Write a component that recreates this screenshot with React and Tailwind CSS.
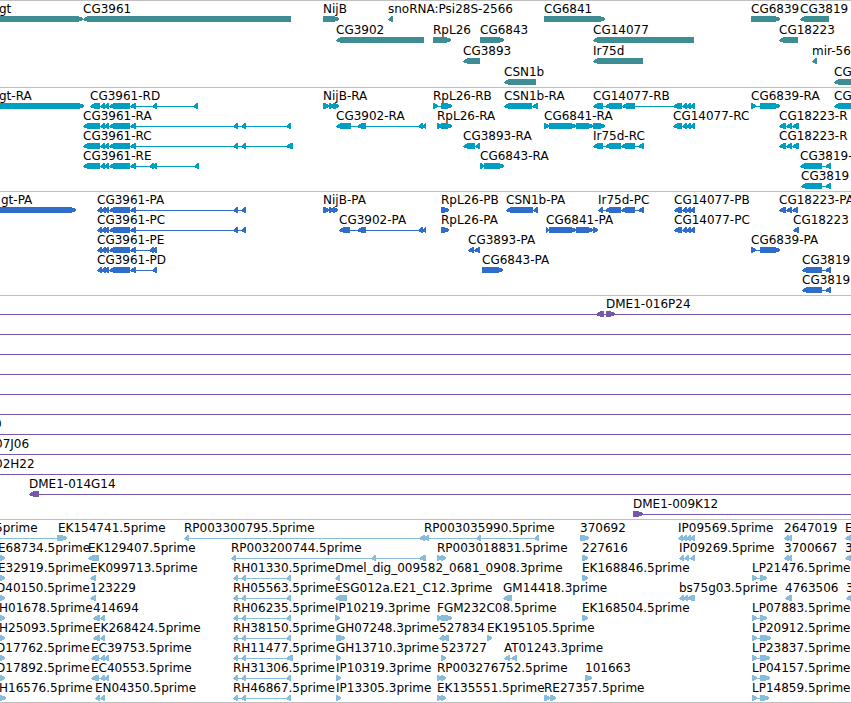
// src/App.jsx
import React from "react";

const HEAD = 6; // length of an arrow head
const GLYPH_HEIGHT = 6;

// Exons shared by several transcripts
const CG3961_EXONS = [[100, 105], [104, 109], [109, 130], [130, 136]];
const CG3961_CDS = [[97, 102], [101, 106], [104, 109], [109, 130], [130, 136]];
const CG14077_EXONS = [[682, 687], [686, 691], [690, 695]];
const CG18223_EXONS = [[779, 786], [786, 792], [792, 799]];
const IR75D_EXONS = [[605, 621], [621, 635], [638, 644]];
const RH_EXONS = [[233, 238], [241, 246], [286, 291]];

// One feature: label, label position, strand, blocks, optional extent of the thin line
const f = (label, x, strand, blocks = [], line = null) => ({
  label,
  x,
  strand,
  blocks,
  line,
});

const bacLine = (label = "", x = 0) => [f(label, x, "+", [], [-10, 4000])];

const tracks = [
  {
    id: "gene",
    color: "fill-[#3f8d94]",
    rowHeight: "h-[21px]",
    padding: "pb-0.5",
    rows: [
      [
        f("gt", -1, "+", [[-20, 83]]),
        f("CG3961", 83, "-", [[83, 291]]),
        f("NijB", 323, "+", [[323, 339]]),
        f("snoRNA:Psi28S-2566", 388, "-", [[388, 393]]),
        f("CG6841", 544, "+", [[544, 605]]),
        f("CG6839", 751, "+", [[751, 780]]),
        f("CG3819", 800, "-", [[800, 829]]),
      ],
      [
        f("CG3902", 336, "-", [[336, 424]]),
        f("RpL26", 433, "+", [[433, 451]]),
        f("CG6843", 480, "+", [[480, 504]]),
        f("CG14077", 593, "-", [[593, 694]]),
        f("CG18223", 779, "-", [[779, 798]]),
      ],
      [
        f("CG3893", 463, "-", [[463, 480]]),
        f("Ir75d", 593, "-", [[593, 643]]),
        f("mir-56", 812, "-", [[812, 817]]),
      ],
      [
        f("CSN1b", 504, "-", [[504, 536]]),
        f("CG", 834, "-", [[834, 880]]),
      ],
    ],
  },
  {
    id: "transcript",
    color: "fill-[#009fc1]",
    rowHeight: "h-5",
    padding: "pb-[3px]",
    rows: [
      [
        f("gt-RA", -1, "+", [[-20, 84]]),
        f("CG3961-RD", 90, "-", [[90, 100], ...CG3961_EXONS, [152, 157], [193, 198]]),
        f("NijB-RA", 323, "+", [[323, 329], [329, 334], [333, 339]]),
        f("RpL26-RB", 433, "+", [[433, 438], [441, 452]]),
        f("CSN1b-RA", 504, "-", [[504, 532], [532, 538]]),
        f("CG14077-RB", 593, "-", [[593, 603], [605, 622], [622, 635], [673, 682], ...CG14077_EXONS]),
        f("CG6839-RA", 751, "+", [[751, 756], [760, 780]]),
        f("CG", 834, "-", [[834, 880]]),
      ],
      [
        f("CG3961-RA", 83, "-", [[83, 100], ...CG3961_EXONS, [233, 238], [241, 246], [286, 291]]),
        f("CG3902-RA", 336, "-", [[336, 351], [357, 366], [418, 423], [422, 426]]),
        f("RpL26-RA", 437, "+", [[437, 442], [441, 452]]),
        f("CG6841-RA", 544, "+", [[544, 549], [549, 576], [576, 593], [593, 605]]),
        f("CG14077-RC", 673, "-", [[673, 682], ...CG14077_EXONS]),
        f("CG18223-R", 779, "-", CG18223_EXONS),
      ],
      [
        f("CG3961-RC", 83, "-", [[83, 100], ...CG3961_EXONS, [233, 238], [241, 246], [286, 293]]),
        f("CG3893-RA", 463, "-", [[463, 475], [475, 480]]),
        f("Ir75d-RC", 593, "-", [[593, 603], ...IR75D_EXONS]),
        f("CG18223-R", 779, "-", CG18223_EXONS),
      ],
      [
        f("CG3961-RE", 83, "-", [[83, 100], ...CG3961_EXONS, [149, 154], [152, 157], [194, 199]]),
        f("CG6843-RA", 480, "+", [[480, 484], [484, 504]]),
        f("CG3819-", 800, "-", [[800, 822], [825, 831]]),
      ],
      [f("CG3819", 801, "-", [[801, 822], [825, 831]])],
    ],
  },
  {
    id: "protein",
    color: "fill-[#306cca]",
    rowHeight: "h-5",
    padding: "pb-[3px]",
    rows: [
      [
        f("gt-PA", 1, "+", [[-20, 76]]),
        f("CG3961-PA", 97, "-", [...CG3961_CDS, [233, 238], [241, 246]]),
        f("NijB-PA", 323, "+", [[323, 329], [329, 334], [333, 338]]),
        f("RpL26-PB", 441, "+", [[441, 449]]),
        f("CSN1b-PA", 506, "-", [[506, 533], [533, 538]]),
        f("Ir75d-PC", 598, "-", [[598, 603], ...IR75D_EXONS]),
        f("CG14077-PB", 674, "-", [[674, 682], ...CG14077_EXONS]),
        f("CG18223-PA", 779, "-", [[779, 786], [786, 792], [792, 798]]),
      ],
      [
        f("CG3961-PC", 97, "-", [...CG3961_CDS, [233, 238], [241, 246]]),
        f("CG3902-PA", 339, "-", [[339, 350], [357, 366], [418, 423], [422, 426]]),
        f("RpL26-PA", 441, "+", [[441, 449]]),
        f("CG6841-PA", 546, "+", [[546, 549], [549, 576], [576, 593], [593, 598]]),
        f("CG14077-PC", 674, "-", [[674, 682], ...CG14077_EXONS]),
        f("CG18223", 793, "-", [[793, 799]]),
      ],
      [
        f("CG3961-PE", 97, "-", [...CG3961_CDS, [149, 154], [152, 157]]),
        f("CG3893-PA", 468, "-", [[468, 474], [474, 480]]),
        f("CG6839-PA", 751, "+", [[751, 756], [760, 780]]),
      ],
      [
        f("CG3961-PD", 97, "-", [...CG3961_CDS, [152, 157]]),
        f("CG6843-PA", 482, "+", [[482, 503]]),
        f("CG3819", 802, "-", [[802, 822], [825, 831]]),
      ],
      [f("CG3819", 802, "-", [[802, 822], [825, 831]])],
    ],
  },
  {
    id: "bac",
    color: "fill-[#7757a8]",
    rowHeight: "h-5",
    padding: "pb-[3px]",
    rows: [
      [
        f("", 0, "-", [[596, 604]], [-10, 605]),
        f("DME1-016P24", 606, "+", [[606, 615]], [605, 4000]),
      ],
      bacLine(),
      bacLine(),
      bacLine(),
      bacLine(),
      bacLine(),
      bacLine("0", -6),
      bacLine("07J06", -5),
      bacLine("02H22", -5),
      [f("DME1-014G14", 29, "-", [[29, 39]], [29, 4000])],
      [f("DME1-009K12", 633, "+", [[633, 643]], [633, 4000])],
    ],
  },
  {
    id: "est",
    color: "fill-[#88bcdd]",
    rowHeight: "h-5",
    padding: "pb-0.5",
    rows: [
      [
        f("5prime", -5, "+", [[57, 67]], [-10, 67]),
        f("EK154741.5prime", 58, "+"),
        f("RP003300795.5prime", 184, "-", [[184, 189], [419, 425], [423, 429]]),
        f("RP003035990.5prime", 424, "-", [[424, 429], [476, 481], [534, 539]]),
        f("370692", 580, "+", [[580, 589]]),
        f("IP09569.5prime", 678, "-", [[678, 683], [682, 687], [686, 691], [690, 695]]),
        f("2647019", 784, "-", [[784, 789], [787, 792]]),
        f("E", 845, "-", [[845, 880]]),
      ],
      [
        f("E68734.5prime", -2, "+", [[-1, 5]]),
        f("EK129407.5prime", 88, "-", [[88, 99]]),
        f("RP003200744.5prime", 231, "-", [[231, 236], [371, 376], [419, 426]]),
        f("RP003018831.5prime", 437, "+", [[437, 442], [441, 446]]),
        f("227616", 582, "+", [[582, 588]]),
        f("IP09269.5prime", 679, "-", [[679, 684], [684, 689], [690, 695]]),
        f("3700667", 784, "-", [[784, 789], [787, 792]]),
        f("3", 845, "-", [[845, 880]]),
      ],
      [
        f("E32919.5prime", -2, "+", [[-1, 5]]),
        f("EK099713.5prime", 90, "-", [[90, 96]]),
        f("RH01330.5prime", 233, "-", RH_EXONS),
        f("Dmel_dig_009582_0681_0908.3prime", 335, "-", [[335, 340]]),
        f("EK168846.5prime", 582, "+", [[582, 588]]),
        f("LP21476.5prime", 752, "+", [[752, 757], [760, 767]]),
      ],
      [
        f("D40150.5prime", -4, "+", [[-1, 5]]),
        f("123229", 90, "-", [[90, 96]]),
        f("RH05563.5prime", 233, "-", RH_EXONS),
        f("ESG012a.E21_C12.3prime", 335, "-", [[335, 347]]),
        f("GM14418.3prime", 503, "-", [[503, 512]]),
        f("bs75g03.5prime", 679, "-", [[679, 684], [683, 688], [687, 695]]),
        f("4763506", 785, "-", [[785, 792]]),
        f("3", 846, "-", [[846, 880]]),
      ],
      [
        f("H01678.5prime", -1, "+", [[-1, 5]]),
        f("414694", 93, "-", [[93, 100], [100, 105]]),
        f("RH06235.5prime", 233, "-", RH_EXONS),
        f("IP10219.3prime", 335, "+", [[335, 340]]),
        f("FGM232C08.5prime", 437, "+", [[437, 442], [441, 452]]),
        f("EK168504.5prime", 582, "+", [[582, 588]]),
        f("LP07883.5prime", 752, "+", [[752, 757], [760, 767]]),
      ],
      [
        f("H25093.5prime", -1, "+", [[-1, 5]]),
        f("EK268424.5prime", 93, "-", [[93, 100], [100, 105]]),
        f("RH38150.5prime", 233, "-", RH_EXONS),
        f("GH07248.3prime", 336, "+", [[336, 345]]),
        f("527834", 439, "-", [[439, 444], [442, 449]]),
        f("EK195105.5prime", 487, "+", [[487, 492]]),
        f("LP20912.5prime", 752, "+", [[752, 757], [760, 771]]),
      ],
      [
        f("D17762.5prime", -4, "+", [[-1, 5]]),
        f("EC39753.5prime", 91, "-", [[91, 99], [100, 105], [104, 109]]),
        f("RH11477.5prime", 233, "-", [[233, 238], [241, 246], [286, 293]]),
        f("GH13710.3prime", 336, "+", [[336, 341]]),
        f("523727", 441, "+", [[441, 446]]),
        f("AT01243.3prime", 504, "-", [[504, 510], [511, 517]]),
        f("LP23837.5prime", 752, "+", [[752, 757], [760, 770]]),
      ],
      [
        f("D17892.5prime", -4, "+", [[-1, 5]]),
        f("EC40553.5prime", 91, "-", [[91, 99], [100, 105], [104, 109]]),
        f("RH31306.5prime", 233, "-", RH_EXONS),
        f("IP10319.3prime", 336, "+", [[336, 341]]),
        f("RP003276752.5prime", 437, "+", [[437, 442], [441, 446]]),
        f("101663", 585, "+", [[585, 592]]),
        f("LP04157.5prime", 752, "+", [[752, 757], [760, 770]]),
      ],
      [
        f("H16576.5prime", -1, "+", [[-1, 6]]),
        f("EN04350.5prime", 95, "-", [[95, 100], [100, 105]]),
        f("RH46867.5prime", 233, "-", RH_EXONS),
        f("IP13305.3prime", 336, "+", [[336, 341]]),
        f("EK135551.5prime", 437, "+", [[437, 442], [441, 446]]),
        f("RE27357.5prime", 544, "+", [[544, 550], [550, 556]]),
        f("LP14859.5prime", 752, "+", [[752, 757], [760, 769]]),
      ],
    ],
  },
];

// Outline of one block, pointed at the end the strand runs to
const blockPoints = (start, end, strand) => {
  const head = Math.min(HEAD, end - start - 1);
  const tip = strand === "+" ? end : start;
  const tail = strand === "+" ? start : end;
  const step = strand === "+" ? -1 : 1;
  const neck = tip + step * head;
  const mid = tip + step * Math.min(2, head);
  const h = GLYPH_HEIGHT;
  return `${tail},0 ${neck},0 ${mid},1 ${tip},3 ${tip},4 ${mid},5 ${neck},${h} ${tail},${h}`;
};

const FeatureGlyph = ({ feature }) => {
  const { blocks, strand } = feature;
  const line =
    feature.line ||
    (blocks.length > 1 ? [blocks[0][0], blocks[blocks.length - 1][1]] : null);

  return (
    <g>
      {line && <rect x={line[0]} y={3} width={line[1] - line[0]} height={1} />}
      {blocks.map(([start, end]) => (
        <polygon key={start} points={blockPoints(start, end, strand)} />
      ))}
    </g>
  );
};

const TrackRow = ({ features, color, rowHeight }) => (
  <div className={`relative flex flex-col ${rowHeight}`}>
    <div className="h-[15px] shrink-0">
      {features
        .filter((feature) => feature.label)
        .map((feature) => (
          <span
            key={`${feature.label}-${feature.x}`}
            className="absolute top-0 whitespace-nowrap leading-4"
            style={{ left: feature.x }}
          >
            {feature.label}
          </span>
        ))}
    </div>
    <svg
      className={`block h-1.5 w-full shrink-0 overflow-visible ${color}`}
      shapeRendering="crispEdges"
      aria-hidden="true"
    >
      {features.map((feature, i) => (
        <FeatureGlyph key={i} feature={feature} />
      ))}
    </svg>
  </div>
);

const Track = ({ track }) => (
  <section className={`border-t border-[#c0c0c0] ${track.padding}`}>
    {track.rows.map((features, i) => (
      <TrackRow
        key={i}
        features={features}
        color={track.color}
        rowHeight={track.rowHeight}
      />
    ))}
  </section>
);

const App = () => {
  return (
    <main className="w-full overflow-hidden border-b border-[#c0c0c0] bg-white font-['DejaVu_Sans',sans-serif] text-xs text-black">
      {tracks.map((track) => (
        <Track key={track.id} track={track} />
      ))}
    </main>
  );
};

export default App;
